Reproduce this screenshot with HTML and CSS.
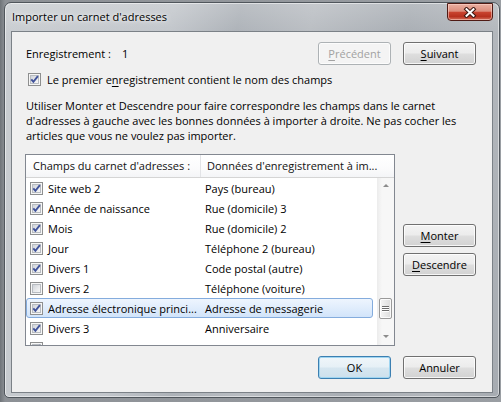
FILE: index.html
```html
<!DOCTYPE html>
<html lang="fr">
<head>
<meta charset="utf-8">
<title>Importer un carnet d'adresses</title>
<link rel="stylesheet" href="styles.css">
</head>
<body>
<div class="window">
  <div class="titlebar">
    <span class="title">Importer un carnet d'adresses</span>
    <button class="close" aria-label="Fermer">
      <svg width="14" height="11" viewBox="0 0 14 11"><path d="M3.5 2.2 L10.5 8.8 M10.5 2.2 L3.5 8.8" stroke="#3b1711" stroke-width="4" stroke-linecap="square" fill="none"/><path d="M3.5 2.2 L10.5 8.8 M10.5 2.2 L3.5 8.8" stroke="#ffffff" stroke-width="2" stroke-linecap="square" fill="none"/></svg>
    </button>
  </div>
  <div class="client">
    <div class="record-row">
      <div class="record">
        <span>Enregistrement :</span><span class="record-value">1</span>
      </div>
      <div class="btn-group">
        <button class="btn" disabled><u>P</u>récédent</button>
        <button class="btn"><u>S</u>uivant</button>
      </div>
    </div>
    <div class="check-line">
      <span class="cb"><span class="cb-fill"></span><svg class="tick" viewBox="0 0 11 11"><path d="M2.3 5.3 L4.4 7.8 L8.9 2.2" fill="none" stroke="#40529a" stroke-width="1.9"/></svg></span>
      <span>Le premier e<u>n</u>registrement contient le nom des champs</span>
    </div>
    <p class="help">Utiliser Monter et Descendre pour faire correspondre les champs dans le carnet<br>d'adresses à gauche avec les bonnes données à importer à droite. Ne pas cocher les<br>articles que vous ne voulez pas importer.</p>
    <div class="middle">
      <div class="list">
        <div class="list-header">
          <div class="hcol1">Champs du carnet d'adresses :</div>
          <div class="hcol2">Données d'enregistrement à im...</div>
        </div>
        <div class="list-body">
          <div class="rows">
            <div class="row"><div class="c1"><span class="cb"><span class="cb-fill"></span><svg class="tick" viewBox="0 0 11 11"><path d="M2.3 5.3 L4.4 7.8 L8.9 2.2" fill="none" stroke="#40529a" stroke-width="1.9"/></svg></span><span class="txt">Site web 2</span></div><div class="c2">Pays (bureau)</div></div>
            <div class="row"><div class="c1"><span class="cb"><span class="cb-fill"></span><svg class="tick" viewBox="0 0 11 11"><path d="M2.3 5.3 L4.4 7.8 L8.9 2.2" fill="none" stroke="#40529a" stroke-width="1.9"/></svg></span><span class="txt">Année de naissance</span></div><div class="c2">Rue (domicile) 3</div></div>
            <div class="row"><div class="c1"><span class="cb"><span class="cb-fill"></span><svg class="tick" viewBox="0 0 11 11"><path d="M2.3 5.3 L4.4 7.8 L8.9 2.2" fill="none" stroke="#40529a" stroke-width="1.9"/></svg></span><span class="txt">Mois</span></div><div class="c2">Rue (domicile) 2</div></div>
            <div class="row"><div class="c1"><span class="cb"><span class="cb-fill"></span><svg class="tick" viewBox="0 0 11 11"><path d="M2.3 5.3 L4.4 7.8 L8.9 2.2" fill="none" stroke="#40529a" stroke-width="1.9"/></svg></span><span class="txt">Jour</span></div><div class="c2">Téléphone 2 (bureau)</div></div>
            <div class="row"><div class="c1"><span class="cb"><span class="cb-fill"></span><svg class="tick" viewBox="0 0 11 11"><path d="M2.3 5.3 L4.4 7.8 L8.9 2.2" fill="none" stroke="#40529a" stroke-width="1.9"/></svg></span><span class="txt">Divers 1</span></div><div class="c2">Code postal (autre)</div></div>
            <div class="row"><div class="c1"><span class="cb"><span class="cb-fill"></span></span><span class="txt">Divers 2</span></div><div class="c2">Téléphone (voiture)</div></div>
            <div class="row selected"><div class="c1"><span class="cb"><span class="cb-fill"></span><svg class="tick" viewBox="0 0 11 11"><path d="M2.3 5.3 L4.4 7.8 L8.9 2.2" fill="none" stroke="#40529a" stroke-width="1.9"/></svg></span><span class="txt">Adresse électronique princi...</span></div><div class="c2">Adresse de messagerie</div></div>
            <div class="row"><div class="c1"><span class="cb"><span class="cb-fill"></span><svg class="tick" viewBox="0 0 11 11"><path d="M2.3 5.3 L4.4 7.8 L8.9 2.2" fill="none" stroke="#40529a" stroke-width="1.9"/></svg></span><span class="txt">Divers 3</span></div><div class="c2">Anniversaire</div></div>
            <div class="row"><div class="c1"><span class="cb"><span class="cb-fill"></span><svg class="tick" viewBox="0 0 11 11"><path d="M2.3 5.3 L4.4 7.8 L8.9 2.2" fill="none" stroke="#40529a" stroke-width="1.9"/></svg></span><span class="txt">Divers 4</span></div><div class="c2">Ville (domicile)</div></div>
          </div>
          <div class="scrollbar">
            <div class="sb-arrow"><span class="tri-up"></span></div>
            <div class="sb-track"><div class="sb-thumb"><span class="grip"></span><span class="grip"></span><span class="grip"></span></div></div>
            <div class="sb-arrow"><span class="tri-down"></span></div>
          </div>
        </div>
      </div>
      <div class="side-buttons">
        <button class="btn"><u>M</u>onter</button>
        <button class="btn"><u>D</u>escendre</button>
      </div>
    </div>
    <div class="footer">
      <button class="btn default">OK</button>
      <button class="btn">Annuler</button>
    </div>
  </div>
</div>
</body>
</html>
```

FILE: styles.css
```css
* { box-sizing: border-box; }
html, body { margin: 0; padding: 0; }
body {
  width: 501px;
  height: 402px;
  overflow: hidden;
  background: linear-gradient(90deg, #6f7479 0%, #8c9095 1%, #9a9ea3 100%);
  font-family: "Open Sans", "Noto Sans", sans-serif;
  font-size: 11px;
  line-height: 15px;
  color: #000;
}
.window {
  margin: 2px 0 0 4px;
  width: 496px;
  height: 396px;
  border: 1px solid #50565c;
  border-radius: 7px 7px 5px 5px;
  background:
    linear-gradient(180deg, rgba(255,255,255,0.18) 0%, rgba(255,255,255,0) 8%),
    linear-gradient(100deg, #c9cdd1 0%, #c2c6cb 30%, #adb2b8 42%, #b9bdc2 55%, #a9aeb4 72%, #b3b7bc 88%, #a6abb1 100%);
  box-shadow: inset 0 0 0 1px rgba(255,255,255,0.5);
  padding: 0 6px 4px 6px;
  display: flex;
  flex-direction: column;
}
.titlebar {
  height: 28px;
  flex: none;
  display: flex;
  align-items: flex-start;
}
.title {
  padding: 6px 0 0 1px;
  font-size: 11px;
  color: #000;
  text-shadow: 0 0 6px rgba(255,255,255,0.9), 0 0 3px rgba(255,255,255,0.7);
}
.close {
  margin-left: auto;
  width: 46px;
  height: 18px;
  padding: 0;
  border: 1px solid #4f1a14;
  border-radius: 0 0 4px 4px;
  background: linear-gradient(180deg, #eab0a2 0%, #dc8d7c 45%, #c8432f 52%, #b7301e 78%, #d4705b 100%);
  box-shadow: inset 0 0 0 1px rgba(255,215,205,0.55);
  display: flex;
  align-items: center;
  justify-content: center;
}
.close svg { display: block; }
.client {
  flex: 1;
  background: #f0f0f0;
  border: 1px solid #7b8187;
  padding: 10px 16px 0 14px;
  display: flex;
  flex-direction: column;
}
.record-row {
  display: flex;
  align-items: center;
  justify-content: space-between;
  height: 23px;
}
.record { display: flex; }
.record-value { margin-left: 11px; }
.btn-group, .footer {
  display: flex;
  gap: 12px;
}
.btn {
  width: 73px;
  height: 23px;
  padding: 0;
  font: inherit;
  color: #000;
  border: 1px solid #707070;
  border-radius: 3px;
  background: linear-gradient(180deg, #f3f3f3 0%, #ececec 48%, #dedede 52%, #d2d2d2 100%);
  box-shadow: inset 0 0 0 1px rgba(255,255,255,0.8);
}
.btn:disabled {
  color: #a2a2a2;
  border-color: #adb2b5;
  background: #f4f4f4;
  box-shadow: inset 0 0 0 1px #fcfcfc;
}
.btn.default {
  border-color: #3c7fb1;
  background: linear-gradient(180deg, #f0f6fa 0%, #e6f0f6 48%, #d6e6f0 52%, #cde0ec 100%);
  box-shadow: inset 0 0 0 1px #9fd5f1;
}
.check-line {
  margin-top: 7px;
  display: flex;
  align-items: center;
  gap: 6px;
  padding-left: 2px;
}
.cb {
  width: 13px;
  height: 13px;
  flex: none;
  border: 1px solid #8e8f8f;
  background: #f6f6f6;
  display: grid;
  place-items: center;
}
.cb-fill {
  grid-area: 1 / 1;
  width: 9px;
  height: 9px;
  border: 1px solid #b8bcc1;
  background: linear-gradient(135deg, #cfd3d9 0%, #e8e9eb 55%, #f8f8f8 100%);
}
.tick {
  grid-area: 1 / 1;
  width: 11px;
  height: 11px;
  overflow: visible;
}
.help {
  margin: 11px 0 0 0;
  white-space: nowrap;
}
.middle {
  margin-top: 11px;
  display: flex;
  gap: 8px;
}
.list {
  margin-left: -1px;
  width: 370px;
  height: 192px;
  border: 1px solid #828790;
  background: #fff;
  display: flex;
  flex-direction: column;
  overflow: hidden;
}
.list-header {
  height: 23px;
  flex: none;
  display: flex;
  border-bottom: 1px solid #d5d5d5;
  background: linear-gradient(180deg, #ffffff 0%, #fbfbfc 60%, #f4f5f7 100%);
  color: #111;
  white-space: nowrap;
}
.hcol1 {
  width: 175px;
  padding: 3px 0 0 7px;
  border-right: 1px solid #e2e3e6;
}
.hcol2 {
  padding: 3px 0 0 6px;
}
.list-body {
  flex: 1;
  display: flex;
  min-height: 0;
}
.rows {
  flex: 1;
  overflow: hidden;
}
.row {
  height: 20px;
  margin-right: 4px;
  border: 1px solid transparent;
  border-radius: 3px;
  display: flex;
  align-items: center;
  white-space: nowrap;
}
.row.selected {
  border-color: #84acdd;
  background: linear-gradient(180deg, #eef5fe 0%, #e0edfc 50%, #d2e4fa 100%);
}
.c1 {
  width: 176px;
  flex: none;
  display: flex;
  align-items: center;
  gap: 5px;
  padding-left: 3px;
  overflow: hidden;
}
.c2 {
  padding-left: 2px;
}
.scrollbar {
  width: 17px;
  flex: none;
  background: linear-gradient(90deg, #ececec 0%, #f7f7f7 30%, #f7f7f7 100%);
  display: flex;
  flex-direction: column;
}
.sb-arrow {
  height: 17px;
  flex: none;
  display: flex;
  align-items: center;
  justify-content: center;
}
.tri-up {
  width: 0;
  height: 0;
  border-left: 3px solid transparent;
  border-right: 3px solid transparent;
  border-bottom: 3px solid #8c8c8c;
  margin-top: -2px;
}
.tri-down {
  width: 0;
  height: 0;
  border-left: 3px solid transparent;
  border-right: 3px solid transparent;
  border-top: 3px solid #8c8c8c;
}
.sb-track {
  flex: 1;
  padding-top: 103px;
}
.sb-thumb {
  margin: 0 2px;
  height: 21px;
  border: 1px solid #9a9a9a;
  border-radius: 2px;
  background: linear-gradient(90deg, #f5f5f5 0%, #e9e9e9 50%, #dcdcdc 100%);
  box-shadow: inset 0 0 0 1px rgba(255,255,255,0.8);
  display: flex;
  flex-direction: column;
  align-items: center;
  justify-content: center;
  gap: 1px;
}
.grip {
  width: 7px;
  height: 1px;
  background: #6d6d6d;
  box-shadow: 0 1px 0 #fff;
}
.side-buttons {
  padding-top: 70px;
  display: flex;
  flex-direction: column;
  gap: 6px;
}
.footer {
  margin-top: 10px;
  justify-content: flex-end;
}
u { text-decoration: underline; text-underline-offset: 2px; }
```
